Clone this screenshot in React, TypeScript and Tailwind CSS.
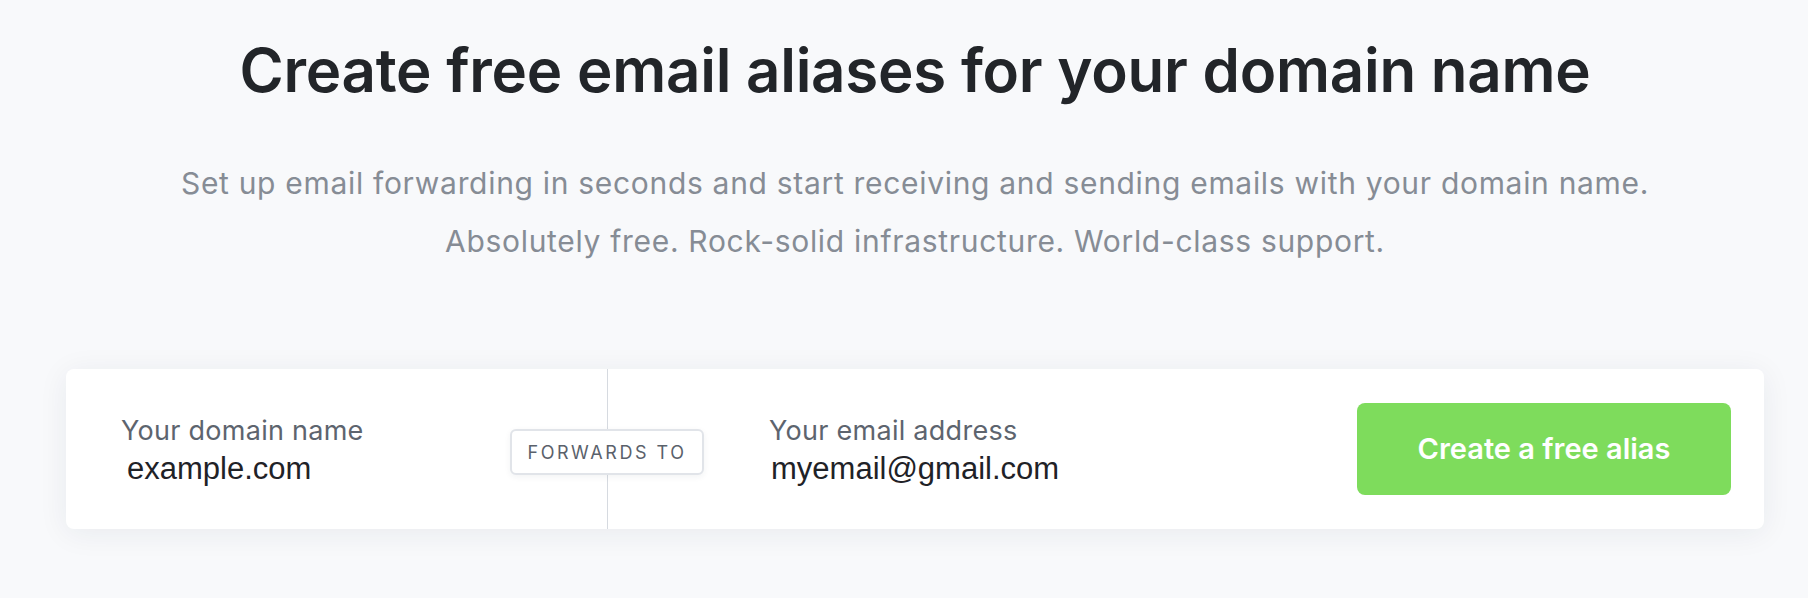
import React from "react";

const sans = { fontFamily: "Inter, 'Noto Sans', sans-serif" };

const AliasField = ({ label, value, inset = "pl-[6px]" }: { label: string; value: string; inset?: string }) => (
  <div className="flex flex-col pt-[4px]">
    <label className="text-[27px] leading-[34px] tracking-[0.01em] text-[#5d646e]">{label}</label>
    <input
      readOnly
      value={value}
      className={`mt-[2px] w-[340px] bg-transparent ${inset} text-[31px] leading-[38px] text-[#1f2227] outline-none font-['Liberation_Sans',Arial,sans-serif]`}
    />
  </div>
);

const App = () => {
  return (
    <div className="min-h-screen bg-[#f8f9fb] font-['Inter','Noto_Sans',sans-serif]" style={sans}>
      <div className="ml-[66px] w-[1698px] pt-[40px]">
        <h1 className="text-center text-6xl font-semibold leading-none tracking-[-0.004em] text-[#222529]">
          Create free email aliases for your domain name
        </h1>
        <p className="mt-[54px] text-center text-[30px] leading-[58px] tracking-[0.023em] text-[#868c95]">
          Set up email forwarding in seconds and start receiving and sending emails with your domain name.
          <br />
          Absolutely free. Rock-solid infrastructure. World-class support.
        </p>

        {/* Alias form */}
        <div className="mt-[99px] flex h-[160px] items-stretch rounded-lg bg-white shadow-[0_4px_30px_rgba(30,45,70,0.07)]">
          <div className="relative flex w-[542px] items-center border-r border-[#d6dae0] pl-[55px]">
            <AliasField label="Your domain name" value="example.com" />
            <span className="absolute right-[-97px] top-1/2 mt-[3px] flex h-[46px] w-[194px] -translate-y-1/2 items-center justify-center rounded-md border-2 border-[#e1e4e9] bg-white text-[18px] uppercase tracking-[0.14em] text-[#5a616b] shadow-[0_2px_6px_rgba(30,45,70,0.06)]">
              Forwards to
            </span>
          </div>
          <div className="flex flex-1 items-center pl-[161px]">
            <AliasField label="Your email address" value="myemail@gmail.com" inset="pl-[2px]" />
          </div>
          <div className="flex items-center pr-[33px]">
            <button className="h-[92px] w-[374px] rounded-lg bg-[#7edc5c] text-[29px] font-semibold text-white">
              Create a free alias
            </button>
          </div>
        </div>
      </div>
    </div>
  );
};

export default App;
